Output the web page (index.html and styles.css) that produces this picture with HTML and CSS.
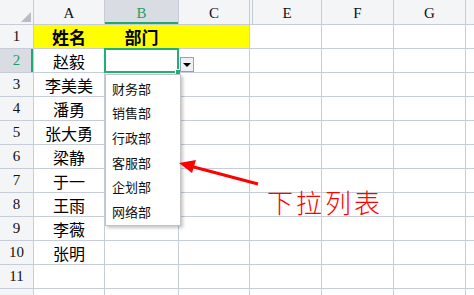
FILE: index.html
```html
<!DOCTYPE html>
<html lang="zh-CN">
<head>
<meta charset="utf-8">
<title>下拉列表</title>
<link rel="stylesheet" href="styles.css">
</head>
<body>
<div class="wrap">
  <div class="sheet">
    <div class="h corner"><span class="tri"></span></div>
    <div class="h">A</div>
    <div class="h active-col">B</div>
    <div class="h">C</div>
    <div class="h hidden-col"></div>
    <div class="h">E</div>
    <div class="h">F</div>
    <div class="h">G</div>
    <div class="h"></div>

    <div class="rh">1</div>
    <div class="c y bold">姓名</div>
    <div class="c y bold">部门</div>
    <div class="c y y-last"></div>
    <div class="c d"></div>
    <div class="c"></div><div class="c"></div><div class="c"></div><div class="c"></div>

    <div class="rh active-row">2</div>
    <div class="c">赵毅</div>
    <div class="c sel"><span class="handle"></span><span class="dd-btn"><span class="dd-tri"></span></span></div>
    <div class="c"></div>
    <div class="c d"></div>
    <div class="c"></div><div class="c"></div><div class="c"></div><div class="c"></div>

    <div class="rh">3</div>
    <div class="c">李美美</div>
    <div class="c"></div><div class="c"></div><div class="c d"></div>
    <div class="c"></div><div class="c"></div><div class="c"></div><div class="c"></div>

    <div class="rh">4</div>
    <div class="c">潘勇</div>
    <div class="c"></div><div class="c"></div><div class="c d"></div>
    <div class="c"></div><div class="c"></div><div class="c"></div><div class="c"></div>

    <div class="rh">5</div>
    <div class="c">张大勇</div>
    <div class="c"></div><div class="c"></div><div class="c d"></div>
    <div class="c"></div><div class="c"></div><div class="c"></div><div class="c"></div>

    <div class="rh">6</div>
    <div class="c">梁静</div>
    <div class="c"></div><div class="c"></div><div class="c d"></div>
    <div class="c"></div><div class="c"></div><div class="c"></div><div class="c"></div>

    <div class="rh">7</div>
    <div class="c">于一</div>
    <div class="c"></div><div class="c"></div><div class="c d"></div>
    <div class="c"></div><div class="c"></div><div class="c"></div><div class="c"></div>

    <div class="rh">8</div>
    <div class="c">王雨</div>
    <div class="c"></div><div class="c"></div><div class="c d"></div>
    <div class="c"></div><div class="c"></div><div class="c"></div><div class="c"></div>

    <div class="rh">9</div>
    <div class="c">李薇</div>
    <div class="c"></div><div class="c"></div><div class="c d"></div>
    <div class="c"></div><div class="c"></div><div class="c"></div><div class="c"></div>

    <div class="rh">10</div>
    <div class="c">张明</div>
    <div class="c"></div><div class="c"></div><div class="c d"></div>
    <div class="c"></div><div class="c"></div><div class="c"></div><div class="c"></div>

    <div class="rh">11</div>
    <div class="c"></div>
    <div class="c"></div><div class="c"></div><div class="c d"></div>
    <div class="c"></div><div class="c"></div><div class="c"></div><div class="c"></div>

    <div class="rh"></div>
    <div class="c"></div>
    <div class="c"></div><div class="c"></div><div class="c d"></div>
    <div class="c"></div><div class="c"></div><div class="c"></div><div class="c"></div>
  </div>

  <ul class="dropdown">
    <li>财务部</li>
    <li>销售部</li>
    <li>行政部</li>
    <li>客服部</li>
    <li>企划部</li>
    <li>网络部</li>
  </ul>

  <svg class="arrow" width="474" height="295" viewBox="0 0 474 295" xmlns="http://www.w3.org/2000/svg">
    <line x1="258" y1="184" x2="190" y2="166" stroke="#ff0000" stroke-width="3"/>
    <polygon points="179,163 196,160 192,173" fill="#ff0000"/>
  </svg>

  <div class="label">下拉列表</div>
</div>
</body>
</html>
```

FILE: styles.css
```css
html, body {
  margin: 0;
  padding: 0;
  background: #ffffff;
}

body {
  width: 474px;
  height: 295px;
  overflow: hidden;
  font-family: "Noto Sans CJK SC", "Noto Sans", sans-serif;
}

.wrap {
  position: relative;
  width: 474px;
  height: 295px;
  overflow: hidden;
}

.sheet {
  display: grid;
  grid-template-columns: 33px 70px 73px 70px 2px 68px 71px 71px 1fr;
  grid-template-rows: 24px repeat(12, 23px);
  gap: 1px;
  background: #c6ccd8;
  width: 474px;
}

.h,
.rh {
  background: #f4f5f7;
  display: flex;
  align-items: center;
  justify-content: center;
  font-family: "Liberation Serif", "DejaVu Serif", serif;
  font-size: 15px;
  color: #111;
  line-height: 1;
}

.h {
  padding-top: 2px;
  box-sizing: border-box;
}

.corner {
  position: relative;
}

.tri {
  position: absolute;
  right: 2px;
  bottom: 2px;
  width: 0;
  height: 0;
  border-left: 10px solid transparent;
  border-bottom: 10px solid #b9bcc2;
}

.active-col {
  background: #d9dce3;
  color: #1f9e68;
  box-shadow: inset 0 -2px 0 #21a86d;
}

.active-row {
  background: #d9dce3;
  color: #1f9e68;
  box-shadow: inset -2px 0 0 #21a86d;
}

.hidden-col {
  background: #f4f5f7;
}

.c {
  background: #ffffff;
  display: flex;
  align-items: center;
  justify-content: center;
  font-size: 16px;
  line-height: 1;
  color: #000;
}

.c.d {
  box-shadow: 1px 0 0 #ffffff;
}

.y {
  background: #ffff00;
  box-shadow: 1px 0 0 #ffff00;
}

.y-last {
  box-shadow: none;
}

.bold {
  font-weight: 700;
  font-size: 17px;
}

.sel {
  position: relative;
}

.sel::before {
  content: "";
  position: absolute;
  left: -1px;
  top: -1px;
  right: -1px;
  bottom: -1px;
  border: 2px solid #21b073;
  z-index: 2;
}

.handle {
  position: absolute;
  right: -2px;
  bottom: -2px;
  width: 4px;
  height: 4px;
  background: #21b073;
  border-left: 1px solid #fff;
  border-top: 1px solid #fff;
  z-index: 3;
}

.dd-btn {
  position: absolute;
  left: calc(100% + 2px);
  top: 8px;
  width: 12px;
  height: 13px;
  background: #eef0f3;
  border: 1px solid #8ea3bf;
  display: flex;
  align-items: center;
  justify-content: center;
  z-index: 3;
}

.dd-tri {
  width: 0;
  height: 0;
  border-left: 4px solid transparent;
  border-right: 4px solid transparent;
  border-top: 4px solid #000;
  margin-top: 1px;
}

.dropdown {
  position: absolute;
  left: 105px;
  top: 74px;
  width: 76px;
  height: 152px;
  box-sizing: border-box;
  margin: 0;
  padding: 1px 0 2px;
  list-style: none;
  background: #ffffff;
  border: 1px solid #c3c3c3;
  box-shadow: 2px 2px 3px rgba(0, 0, 0, 0.22);
  z-index: 5;
}

.dropdown li {
  height: 24.6px;
  display: flex;
  align-items: center;
  padding-left: 6px;
  font-size: 13px;
  line-height: 1;
  color: #111;
}

.arrow {
  position: absolute;
  left: 0;
  top: 0;
  z-index: 6;
}

.label {
  position: absolute;
  left: 267px;
  top: 187px;
  font-size: 26px;
  letter-spacing: 3px;
  line-height: 30px;
  color: #ff0000;
  font-weight: 300;
  z-index: 6;
}
```
